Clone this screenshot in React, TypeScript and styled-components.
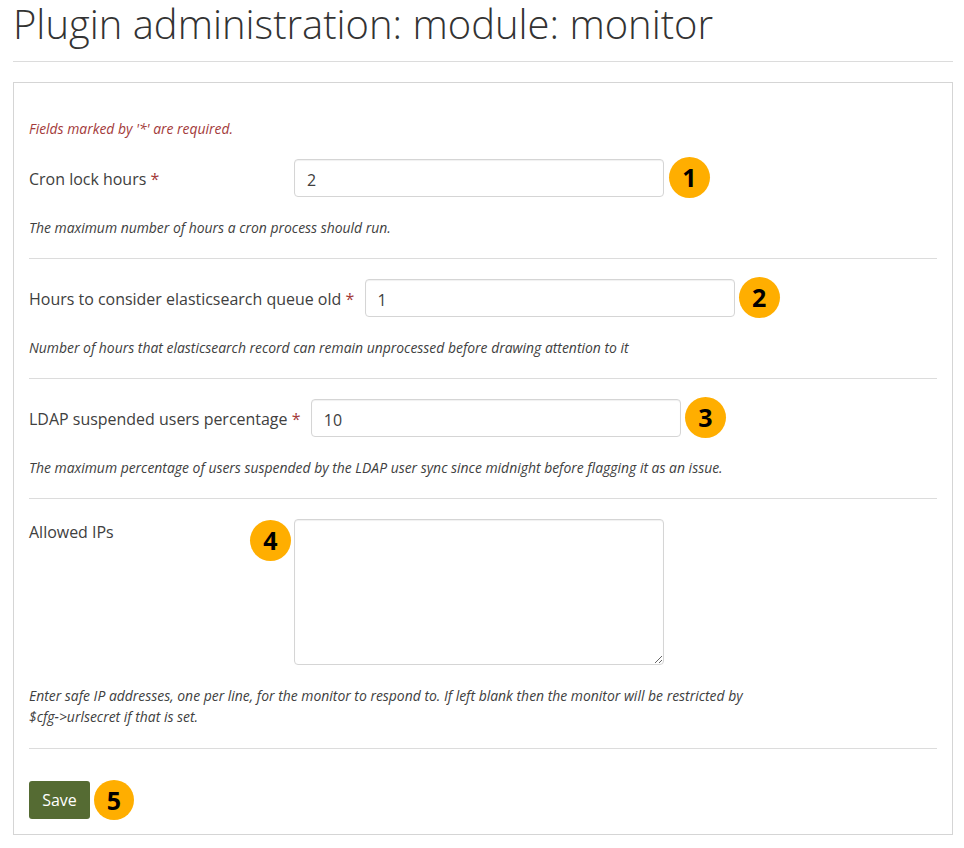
import React from 'react';
import styled, { createGlobalStyle } from 'styled-components';

const GlobalStyle = createGlobalStyle`
  html, body {
    margin: 0;
    background: #fff;
  }
  body {
    font-family: 'Open Sans', 'Liberation Sans', sans-serif;
    font-size: 15.98px;
    line-height: 21px;
    color: #404040;
  }
`;

const Page = styled.div`
  width: 964px;
  height: 848px;
  box-sizing: border-box;
  padding: 0 11px 0 13px;
`;

const Title = styled.h1`
  margin: 0 0 20px;
  height: 61px;
  border-bottom: 1px solid #dcdcdc;
  font-size: 39.95px;
  line-height: 48px;
  font-weight: 300;
  color: #333;
`;

const Panel = styled.form`
  height: 753px;
  box-sizing: border-box;
  border: 1px solid #d5d5d5;
  padding: 35px 15px 0;
`;

const Required = styled.p`
  margin: 0 0 20px;
  font-size: 13.9px;
  line-height: 21px;
  font-style: italic;
  color: #a33a3a;
`;

const Row = styled.div<{ $multiline?: boolean }>`
  position: relative;
  padding-bottom: ${(p) => (p.$multiline ? '21px' : '20px')};
  margin-bottom: 20px;
  border-bottom: 1px solid #dcdcdc;
`;

const Control = styled.div`
  display: flex;
  align-items: center;
`;

const Label = styled.label`
  flex: none;
  min-width: 265px;
  padding: 2px 10.4px 0 0;
  box-sizing: border-box;
`;

const TopLabel = styled(Label)`
  align-self: flex-start;
  padding-top: 3px;
`;

const Star = styled.span`
  color: #a33a3a;
`;

const TextInput = styled.input`
  flex: none;
  width: 370px;
  height: 38px;
  box-sizing: border-box;
  padding: 4px 12px 0;
  border: 1px solid #d5d5d5;
  border-radius: 4px;
  box-shadow: inset 0 1px 1px rgba(0, 0, 0, 0.06);
  font: inherit;
  color: #404040;
  outline: none;
`;

const TextArea = styled.textarea`
  display: block;
  flex: none;
  width: 370px;
  height: 146px;
  box-sizing: border-box;
  padding: 8px 12px;
  border: 1px solid #d5d5d5;
  border-radius: 4px;
  box-shadow: inset 0 1px 1px rgba(0, 0, 0, 0.06);
  font: inherit;
  outline: none;
`;

const Help = styled.p`
  margin: 20px 0 0;
  max-width: 735px;
  font-size: 13.93px;
  line-height: 21px;
  font-style: italic;
  color: #404040;
`;

const Badge = styled.span<{ $gap?: number }>`
  flex: none;
  width: 41px;
  height: 41px;
  margin: -2px 0 -1px ${(p) => p.$gap ?? 4}px;
  border-radius: 50%;
  background: #ffae00;
  color: #000;
  font-size: 25px;
  font-weight: 700;
  line-height: 41px;
  text-align: center;
`;

const FloatingBadge = styled(Badge)`
  position: absolute;
  left: 221px;
  top: 1px;
  margin: 0;
`;

const SaveRow = styled.div`
  display: flex;
  align-items: center;
  margin-top: 32px;
`;

const SaveButton = styled.button`
  width: 61px;
  height: 38px;
  padding: 0;
  border: 0;
  border-radius: 3px;
  background: #556b33;
  color: #fff;
  font: inherit;
`;

const SaveBadge = styled(Badge)`
  width: 40px;
  height: 40px;
  line-height: 40px;
  margin: -1px 0 -1px 4px;
`;

export default function App() {
  return (
    <Page>
      <GlobalStyle />
      <Title>Plugin administration: module: monitor</Title>
      <Panel>
        <Required>Fields marked by '*' are required.</Required>
        <Row>
          <Control>
            <Label>Cron lock hours <Star>*</Star></Label>
            <TextInput defaultValue="2" />
            <Badge $gap={5}>1</Badge>
          </Control>
          <Help>The maximum number of hours a cron process should run.</Help>
        </Row>
        <Row>
          <Control>
            <Label>Hours to consider elasticsearch queue old <Star>*</Star></Label>
            <TextInput defaultValue="1" />
            <Badge>2</Badge>
          </Control>
          <Help>Number of hours that elasticsearch record can remain unprocessed before drawing attention to it</Help>
        </Row>
        <Row>
          <Control>
            <Label>LDAP suspended users percentage <Star>*</Star></Label>
            <TextInput defaultValue="10" />
            <Badge>3</Badge>
          </Control>
          <Help>The maximum percentage of users suspended by the LDAP user sync since midnight before flagging it as an issue.</Help>
        </Row>
        <Row $multiline>
          <Control>
            <TopLabel>Allowed IPs</TopLabel>
            <TextArea />
            <FloatingBadge>4</FloatingBadge>
          </Control>
          <Help>Enter safe IP addresses, one per line, for the monitor to respond to. If left blank then the monitor will be restricted by $cfg-&gt;urlsecret if that is set.</Help>
        </Row>
        <SaveRow>
          <SaveButton type="button">Save</SaveButton>
          <SaveBadge>5</SaveBadge>
        </SaveRow>
      </Panel>
    </Page>
  );
}
